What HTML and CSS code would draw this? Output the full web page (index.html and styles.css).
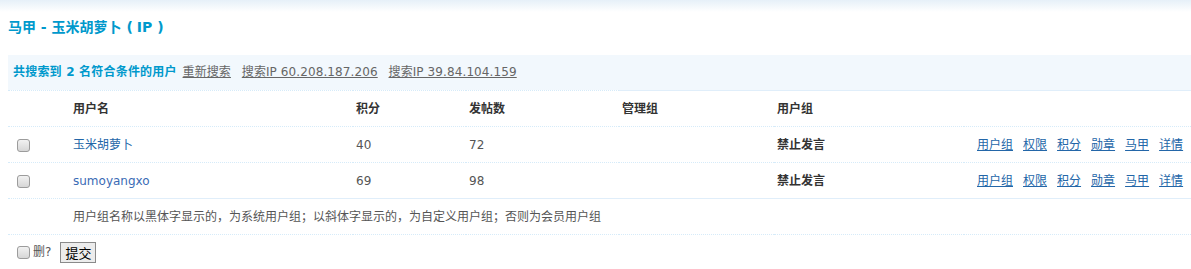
FILE: index.html
```html
<!DOCTYPE html>
<html lang="zh-CN">
<head>
<meta charset="utf-8">
<title>马甲</title>
<link rel="stylesheet" href="styles.css">
</head>
<body>
<div class="page">
  <h3 class="title">马甲 - 玉米胡萝卜 <span class="paren">(</span>IP )</h3>
  <div class="searchbar">
    <strong class="found">共搜索到 2 名符合条件的用户</strong>
    <a class="slink first" href="#">重新搜索</a>
    <a class="slink" href="#">搜索IP 60.208.187.206</a>
    <a class="slink" href="#">搜索IP 39.84.104.159</a>
  </div>
  <table class="tb">
    <colgroup>
      <col class="c1"><col class="c2"><col class="c3"><col class="c4"><col class="c5"><col class="c6"><col>
    </colgroup>
    <tr class="header">
      <td class="dot"></td>
      <td class="dot">用户名</td>
      <td class="dot">积分</td>
      <td class="dot">发帖数</td>
      <td>管理组</td>
      <td>用户组</td>
      <td></td>
    </tr>
    <tr>
      <td class="chk"><input type="checkbox"></td>
      <td><a class="ulink" href="#">玉米胡萝卜</a></td>
      <td>40</td>
      <td>72</td>
      <td></td>
      <td class="grp">禁止发言</td>
      <td class="ops"><a href="#">用户组</a><a href="#">权限</a><a href="#">积分</a><a href="#">勋章</a><a href="#">马甲</a><a href="#">详情</a></td>
    </tr>
    <tr class="last">
      <td class="chk"><input type="checkbox"></td>
      <td><a class="ulink alt" href="#">sumoyangxo</a></td>
      <td>69</td>
      <td>98</td>
      <td></td>
      <td class="grp">禁止发言</td>
      <td class="ops"><a href="#">用户组</a><a href="#">权限</a><a href="#">积分</a><a href="#">勋章</a><a href="#">马甲</a><a href="#">详情</a></td>
    </tr>
    <tr class="note">
      <td></td>
      <td colspan="6">用户组名称以黑体字显示的，为系统用户组；以斜体字显示的，为自定义用户组；否则为会员用户组</td>
    </tr>
    <tr class="foot">
      <td colspan="7"><label class="del"><input type="checkbox"><span>删?</span></label><button class="btn" type="button">提交</button></td>
    </tr>
  </table>
</div>
</body>
</html>
```

FILE: styles.css
```css
html, body {
  margin: 0;
  padding: 0;
}
body {
  background: #fff linear-gradient(to bottom, #e6f0f8 0, #ffffff 12px) no-repeat;
  font: 12px/1.5 "DejaVu Sans", "Noto Sans CJK SC", sans-serif;
  color: #333;
}
.page {
  padding-left: 8px;
}
.title {
  margin: 0 0 19px 0;
  padding-top: 18px;
  font-size: 14px;
  line-height: 18px;
  font-weight: bold;
  color: #0099cc;
}
.paren {
  margin-right: 4px;
}
.searchbar {
  height: 35px;
  line-height: 35px;
  padding-left: 5px;
  background: #f2f8fd;
  white-space: nowrap;
}
.found {
  color: #0099cc;
  font-weight: bold;
  letter-spacing: 0.2px;
}
.slink {
  color: #666;
  text-decoration: underline;
  margin-left: 7px;
  letter-spacing: 0.1px;
}
.slink.first {
  margin-left: 2px;
}
.tb {
  width: 100%;
  border-collapse: collapse;
  table-layout: fixed;
}
.c1 { width: 62px; }
.c2 { width: 283px; }
.c3 { width: 113px; }
.c4 { width: 153px; }
.c5 { width: 155px; }
.c6 { width: 190px; }
.tb td {
  height: 35px;
  padding: 0 3px;
  border-top: 1px dotted #d6ebf9;
  color: #555;
  white-space: nowrap;
  vertical-align: middle;
}
.tb .header td {
  border-top: 1px solid #e0eefa;
  color: #333;
  font-weight: bold;
}
.tb .header td.dot {
  border-top: 1px dotted #d6ebf9;
}
.tb .note td {
  border-top: 1px solid #e0eefa;
}
.tb .note td:first-child {
  border-top: 1px dotted #d6ebf9;
}
.tb td.chk {
  padding-left: 9px;
}
.chk input, .del input {
  -webkit-appearance: none;
  appearance: none;
  box-sizing: border-box;
  margin: 0;
  width: 13px;
  height: 13px;
  border: 1px solid #9c9c9c;
  border-radius: 3px;
  background: linear-gradient(to bottom, #f2f2f2 0, #d6d6d6 100%);
  vertical-align: middle;
}
.ulink {
  color: #2366a8;
  text-decoration: none;
}
.ulink.alt {
  color: #3a6bb5;
}
.tb td.grp {
  color: #333;
  font-weight: bold;
}
.tb td.ops {
  text-align: right;
  padding-right: 8px;
}
.ops a {
  color: #2366a8;
  text-decoration: underline;
  margin-left: 10px;
}
.tb .foot td {
  height: 34px;
  padding-left: 9px;
}
.del {
  display: inline-flex;
  align-items: center;
  color: #555;
  vertical-align: middle;
}
.del span {
  margin-left: 3px;
}
.btn {
  margin-left: 9px;
  height: 21px;
  padding: 0 4px;
  font: 13px "Noto Sans CJK SC", sans-serif;
  line-height: 19px;
  color: #000;
  background: #ececec;
  border: 1px solid #8a8a8a;
  border-radius: 0;
  vertical-align: middle;
}
```
